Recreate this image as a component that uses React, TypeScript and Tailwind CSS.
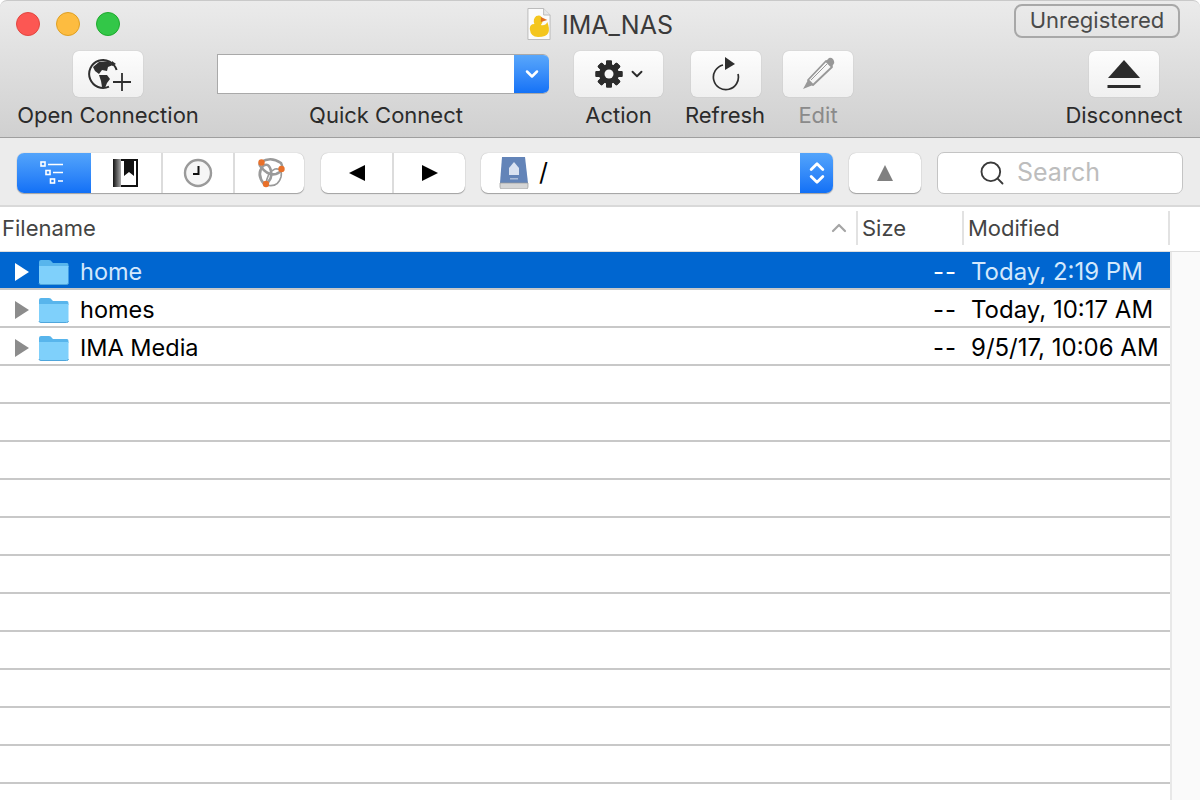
import React from 'react';
import { ChevronDown, ChevronUp, ChevronsUpDown, Search } from 'lucide-react';

interface FileRow {
  name: string;
  modified: string;
}

const files: FileRow[] = [
  { name: 'home', modified: 'Today, 2:19 PM' },
  { name: 'homes', modified: 'Today, 10:17 AM' },
  { name: 'IMA Media', modified: '9/5/17, 10:06 AM' },
];

const emptyRows = Array.from({ length: 12 }, (_, i) => i);

const GlobePlus = () => (
  <svg width="44" height="34" viewBox="0 0 44 34">
    <path d="M28.6 12 A14 14 0 1 0 21 28.7" fill="none" stroke="#2e2e2e" strokeWidth="2" />
    <path d="M5 9 L11 4 L20 3 L25 7 L20 9 L19 13 L14 12 L11 16 L7 13 Z" fill="#2e2e2e" />
    <path d="M11 17 L19 17 L22 21 L19 25 L17 30 L14 29 L13 23 Z" fill="#2e2e2e" />
    <path d="M24 3 L28 6 L24 8 Z" fill="#2e2e2e" />
    <path d="M34 15 V33 M25 24 H43" stroke="#2e2e2e" strokeWidth="1.8" />
  </svg>
);

const Gear = () => (
  <svg width="28" height="28" viewBox="0 0 28 28">
    {[0, 45, 90, 135, 180, 225, 270, 315].map((a) => (
      <rect key={a} x="11" y="0.5" width="6" height="27" rx="1" fill="#2b2b2b" transform={`rotate(${a} 14 14)`} />
    ))}
    <circle cx="14" cy="14" r="10" fill="#2b2b2b" />
    <circle cx="14" cy="14" r="4.5" fill="#f8f8f8" />
  </svg>
);

const Refresh = () => (
  <svg width="30" height="34" viewBox="0 0 30 34">
    <path d="M12 8 A12.5 12.5 0 1 0 27 17" fill="none" stroke="#2e2e2e" strokeWidth="1.7" />
    <path d="M14 0 L24 7 L14 13 Z" fill="#2e2e2e" />
  </svg>
);

const Pencil = () => (
  <svg width="36" height="36" viewBox="0 0 36 36">
    <path d="M8 24 L26 5 L32 11 L13 29 Z" fill="none" stroke="#989898" strokeWidth="1.8" strokeLinejoin="round" />
    <path d="M26 5 L29 2 Q31 1 33 3 L34 5 Q35 7 33 9 L32 11 Z" fill="#989898" />
    <path d="M8 24 L13 29 L3 33 Z" fill="#989898" />
    <path d="M11 24 L27 8" stroke="#989898" strokeWidth="1" />
  </svg>
);

const Eject = () => (
  <svg width="34" height="30" viewBox="0 0 34 30">
    <path d="M17 1 L33 19 H1 Z" fill="#2b2b2b" />
    <rect x="0.5" y="26" width="33" height="3" fill="#2b2b2b" />
  </svg>
);

const DuckDoc = () => (
  <svg width="24" height="32" viewBox="0 0 26 32" preserveAspectRatio="none">
    <path d="M1 .5 H18 L25 7 V31.5 H1 Z" fill="#fbfbfb" stroke="#b9b9b9" />
    <path d="M18 .5 V7 H25" fill="#e6e6e6" stroke="#b9b9b9" />
    <path d="M3 21 Q3 16 8 16 Q6 11 10 8 Q16 6 17 12 Q17 15 15 17 Q20 18 22 14 Q25 21 23 25 Q21 29 12 29 Q4 29 3 21 Z" fill="#f4c61d" />
    <path d="M15 9 L22 12 L15 14 Z" fill="#e2701f" />
  </svg>
);

const TreeIcon = () => (
  <svg width="24" height="24" viewBox="0 0 24 24">
    <g fill="none" stroke="#fff" strokeWidth="1.6">
      <rect x="1" y="1" width="4" height="4" />
      <rect x="6" y="9.5" width="4" height="4" />
      <rect x="10.5" y="18" width="4" height="4" />
    </g>
    <path d="M8 3.5 H23 M13 11.5 H23 M18 20 H23" stroke="#fff" strokeWidth="1.7" />
  </svg>
);

const BookmarkIcon = () => (
  <svg width="26" height="28" viewBox="0 0 26 28">
    <defs>
      <linearGradient id="bookSpine" x1="0" x2="1" y1="0" y2="0">
        <stop offset="0" stopColor="#111" />
        <stop offset="1" stopColor="#aaa" />
      </linearGradient>
    </defs>
    <rect x="0" y="0" width="8" height="28" fill="url(#bookSpine)" />
    <rect x="8" y="0" width="17" height="28" fill="#111" />
    <rect x="8" y="2" width="15" height="24" fill="#fff" />
    <path d="M11 0 H21 V17 L16 13 L11 17 Z" fill="#111" />
  </svg>
);

const ClockIcon = () => (
  <svg width="30" height="30" viewBox="0 0 30 30">
    <circle cx="15" cy="15" r="13" fill="#f6f6f6" stroke="#9a9a9a" strokeWidth="2.4" />
    <path d="M15.5 8 V16 H10" fill="none" stroke="#111" strokeWidth="2" />
  </svg>
);

const BonjourIcon = () => (
  <svg width="32" height="32" viewBox="0 0 32 32">
    <g fill="none" stroke="#9a9a9a" strokeWidth="2.6">
      <path d="M7 5 Q17 -1 27 6 Q31 14 22 17 Q14 19 7 10 Q4 7 7 5 Z" />
      <path d="M10 27 Q2 17 9 9 Q15 5 17 14 Q19 22 11 28" />
      <path d="M12 28 Q24 31 27 20 Q29 11 21 12 Q13 15 12 28" strokeWidth="1.6" />
    </g>
    <circle cx="7.5" cy="5.5" r="3.2" fill="#e8702a" />
    <circle cx="27.5" cy="12" r="3.2" fill="#e8702a" />
    <circle cx="12" cy="27" r="3.2" fill="#e8702a" />
  </svg>
);

const DiskIcon = () => (
  <svg width="30" height="32" viewBox="0 0 30 32">
    <path d="M3 0 H26 L29 26 H1 Z" fill="#6384b8" />
    <path d="M1 26 H29 V30 Q29 32 27 32 H3 Q1 32 1 30 Z" fill="#d6d6d6" stroke="#9a9a9a" strokeWidth=".7" />
    <path d="M15 5 L20 11 V18 H10 V11 Z" fill="#d9e2f1" />
    <rect x="11" y="21" width="8" height="1.5" fill="#a9bbd8" />
  </svg>
);

const Folder = () => (
  <svg width="31" height="26" viewBox="0 0 31 26">
    <path d="M1 3 Q1 1 3 1 H11 Q13 1 14 3 L15 4 H29 Q30.5 4 30.5 6 V8 H1 Z" fill="#58b5ec" />
    <path d="M1 7 H30.5 V23.5 Q30.5 25.5 28.5 25.5 H3 Q1 25.5 1 23.5 Z" fill="#7fd0fb" />
    <path d="M1 24 Q1 25.5 3 25.5 H28.5 Q30.5 25.5 30.5 24" fill="none" stroke="#4fa6dc" />
  </svg>
);

const ToolbarButton: React.FC<{ label: string; width: string; btn: string; disabled?: boolean; children: React.ReactNode }> = ({
  label,
  width,
  btn,
  disabled,
  children,
}) => (
  <div className={`flex flex-col items-center ${width}`}>
    <div className={`h-[46px] ${btn} flex items-center justify-center rounded-[6px] bg-gradient-to-b from-[#fdfdfd] to-[#f0f0f0] shadow-[0_0_1px_rgba(0,0,0,0.3)]`}>
      {children}
    </div>
    <span className={`mt-[4px] text-[22px] leading-[28px] whitespace-nowrap ${disabled ? 'text-[#8a8a8a]' : 'text-[#2b2b2b]'}`}>{label}</span>
  </div>
);

export default function App() {
  return (
    <div className="h-[800px] w-[1200px] overflow-hidden bg-white font-['Inter','Liberation_Sans',sans-serif]">
      {/* Barra de título e ferramentas */}
      <div className="h-[138px] rounded-t-[7px] border-t border-b border-t-[#c9c9c9] border-b-[#9f9f9f] bg-gradient-to-b from-[#ebebeb] to-[#d0d0d0]">
        <div className="grid h-[50px] grid-cols-[1fr_auto_1fr] items-center">
          <div className="flex gap-4 pb-[4px] pl-4">
            <span className="h-6 w-6 rounded-full border border-[#e2463f] bg-[#fc5753]" />
            <span className="h-6 w-6 rounded-full border border-[#dfa023] bg-[#fdbc40]" />
            <span className="h-6 w-6 rounded-full border border-[#1eaa2d] bg-[#33c748]" />
          </div>
          <div className="flex items-center gap-[11px] pb-[2px]">
            <span className="mb-[3px]"><DuckDoc /></span>
            <span className="text-[25px] leading-none text-[#3a3a3a]">IMA_NAS</span>
          </div>
          <div className="flex justify-end pr-5">
            <div className="mb-[11px] flex h-[34px] w-[166px] items-center justify-center rounded-[8px] border-2 border-[#a8a8a8] text-[22px] text-[#4a4a4a]">
              Unregistered
            </div>
          </div>
        </div>
        <div className="flex px-[17px]">
          <ToolbarButton label="Open Connection" width="w-[182px]" btn="w-[70px]">
            <span className="ml-[3px] mt-[2px]"><GlobePlus /></span>
          </ToolbarButton>
          <div className="ml-[18px] flex w-[332px] flex-col items-center">
            <div className="flex h-[46px] w-full items-center">
              <div className="flex h-10 w-full overflow-hidden rounded-r-[6px] border-y border-l border-[#a9a9a9] bg-white">
                <div className="flex-1" />
                <div className="-my-px flex w-[35px] items-center justify-center bg-gradient-to-b from-[#5aa8fb] to-[#1170f6]">
                  <ChevronDown size={20} strokeWidth={3} color="#fff" />
                </div>
              </div>
            </div>
            <span className="ml-[6px] mt-[4px] text-[22px] leading-[28px] text-[#2b2b2b]">Quick Connect</span>
          </div>
          <ToolbarButton label="Action" width="ml-[25px] w-[89px]" btn="w-[89px] gap-[5px] pl-[3px]">
            <Gear />
            <ChevronDown size={18} strokeWidth={2.5} color="#2b2b2b" />
          </ToolbarButton>
          <ToolbarButton label="Refresh" width="ml-[22px] w-[80px]" btn="ml-[2px] w-[70px]">
            <Refresh />
          </ToolbarButton>
          <ToolbarButton label="Edit" width="ml-[18px] w-[70px]" btn="w-[70px]" disabled>
            <Pencil />
          </ToolbarButton>
          <div className="flex-1" />
          <ToolbarButton label="Disconnect" width="w-[118px]" btn="w-[70px]">
            <Eject />
          </ToolbarButton>
        </div>
      </div>

      {/* Barra de navegação */}
      <div className="flex h-[69px] items-center border-b-2 border-[#d9d9d9] bg-[#ececec] px-[17px] pt-[2px]">
        <div className="flex h-10 w-[287px] overflow-hidden rounded-[7px] bg-white shadow-[0_1px_1px_rgba(0,0,0,0.3),0_0_1px_rgba(0,0,0,0.3)]">
          <div className="flex w-[74px] items-center justify-center bg-gradient-to-b from-[#53a4fb] to-[#1170f6] pr-[5px]">
            <TreeIcon />
          </div>
          <div className="flex w-[72px] items-center justify-center border-r-2 border-[#dcdcdc]">
            <BookmarkIcon />
          </div>
          <div className="flex w-[72px] items-center justify-center border-r-2 border-[#dcdcdc]">
            <ClockIcon />
          </div>
          <div className="flex flex-1 items-center justify-center">
            <BonjourIcon />
          </div>
        </div>
        <div className="ml-[17px] flex h-10 w-[144px] rounded-[7px] bg-white shadow-[0_1px_1px_rgba(0,0,0,0.3),0_0_1px_rgba(0,0,0,0.3)]">
          <div className="flex w-[73px] items-center justify-center border-r-2 border-[#dcdcdc]">
            <svg width="16" height="16" viewBox="0 0 16 16"><path d="M0 8 L16 0 V16 Z" fill="#000" /></svg>
          </div>
          <div className="flex flex-1 items-center justify-center">
            <svg width="16" height="16" viewBox="0 0 16 16"><path d="M16 8 L0 0 V16 Z" fill="#000" /></svg>
          </div>
        </div>
        <div className="ml-[16px] flex h-10 w-[352px] overflow-hidden rounded-[7px] bg-white shadow-[0_1px_1px_rgba(0,0,0,0.3),0_0_1px_rgba(0,0,0,0.3)]">
          <div className="flex flex-1 items-center pl-[18px]">
            <DiskIcon />
            <span className="ml-[10px] text-[25px] text-black">/</span>
          </div>
          <div className="flex w-[33px] items-center justify-center bg-gradient-to-b from-[#53a4fb] to-[#1170f6]">
            <ChevronsUpDown size={28} strokeWidth={2.4} color="#fff" />
          </div>
        </div>
        <div className="ml-[16px] flex h-10 w-[72px] items-center justify-center rounded-[7px] bg-white shadow-[0_1px_1px_rgba(0,0,0,0.3),0_0_1px_rgba(0,0,0,0.3)]">
          <svg width="16" height="16" viewBox="0 0 16 16"><path d="M8 0 L16 16 H0 Z" fill="#808080" /></svg>
        </div>
        <div className="ml-[16px] flex h-[42px] w-[246px] items-center rounded-[7px] border border-[#c4c4c4] bg-white pl-[40px]">
          <Search size={28} strokeWidth={1.6} color="#3a3a3a" />
          <span className="ml-[11px] text-[25px] text-[#bdbdbd]">Search</span>
        </div>
      </div>

      {/* Cabeçalho da lista */}
      <div className="flex h-[45px] items-center border-b border-[#dedede] bg-white pb-[2px] text-[22px] text-[#444]">
        <div className="flex h-[34px] w-[858px] items-center justify-between border-r-2 border-[#e2e2e2] pl-[2px] pr-[5px]">
          <span>Filename</span>
          <ChevronUp size={24} strokeWidth={2.2} color="#a5a5a5" />
        </div>
        <div className="flex h-[34px] w-[106px] items-center border-r-2 border-[#e2e2e2] pl-[4px]">Size</div>
        <div className="flex h-[34px] w-[206px] items-center border-r-2 border-[#e2e2e2] pl-[4px]">Modified</div>
      </div>

      {/* Lista de arquivos */}
      <div className="flex">
        <div className="w-[1170px]">
          {files.map((file, i) => (
            <div
              key={file.name}
              className={`flex h-[38px] items-center border-b-2 border-[#c8c8c8] pt-[3px] text-[24px] ${i === 0 ? 'bg-[#0066d0] text-[#d3e8fc]' : 'text-black'}`}
            >
              <svg width="16" height="18" viewBox="0 0 16 18" className="ml-[14px] mr-[8px]">
                <path d="M1 0 L15 9 L1 18 Z" fill={i === 0 ? '#fff' : '#8c8c8c'} />
              </svg>
              <Folder />
              <span className="ml-[11px] flex-1 text-[23.5px]">{file.name}</span>
              <span className={`tracking-[1px] ${i === 0 ? 'text-white' : ''}`}>--</span>
              <span className="ml-[14px] w-[199px] whitespace-nowrap">{file.modified}</span>
            </div>
          ))}
          {emptyRows.map((i) => (
            <div key={i} className="h-[38px] border-b-2 border-[#c8c8c8]" />
          ))}
        </div>
        <div className="h-[600px] flex-1 border-l-2 border-[#e8e8e8] bg-[#fafafa]" />
      </div>
    </div>
  );
}
